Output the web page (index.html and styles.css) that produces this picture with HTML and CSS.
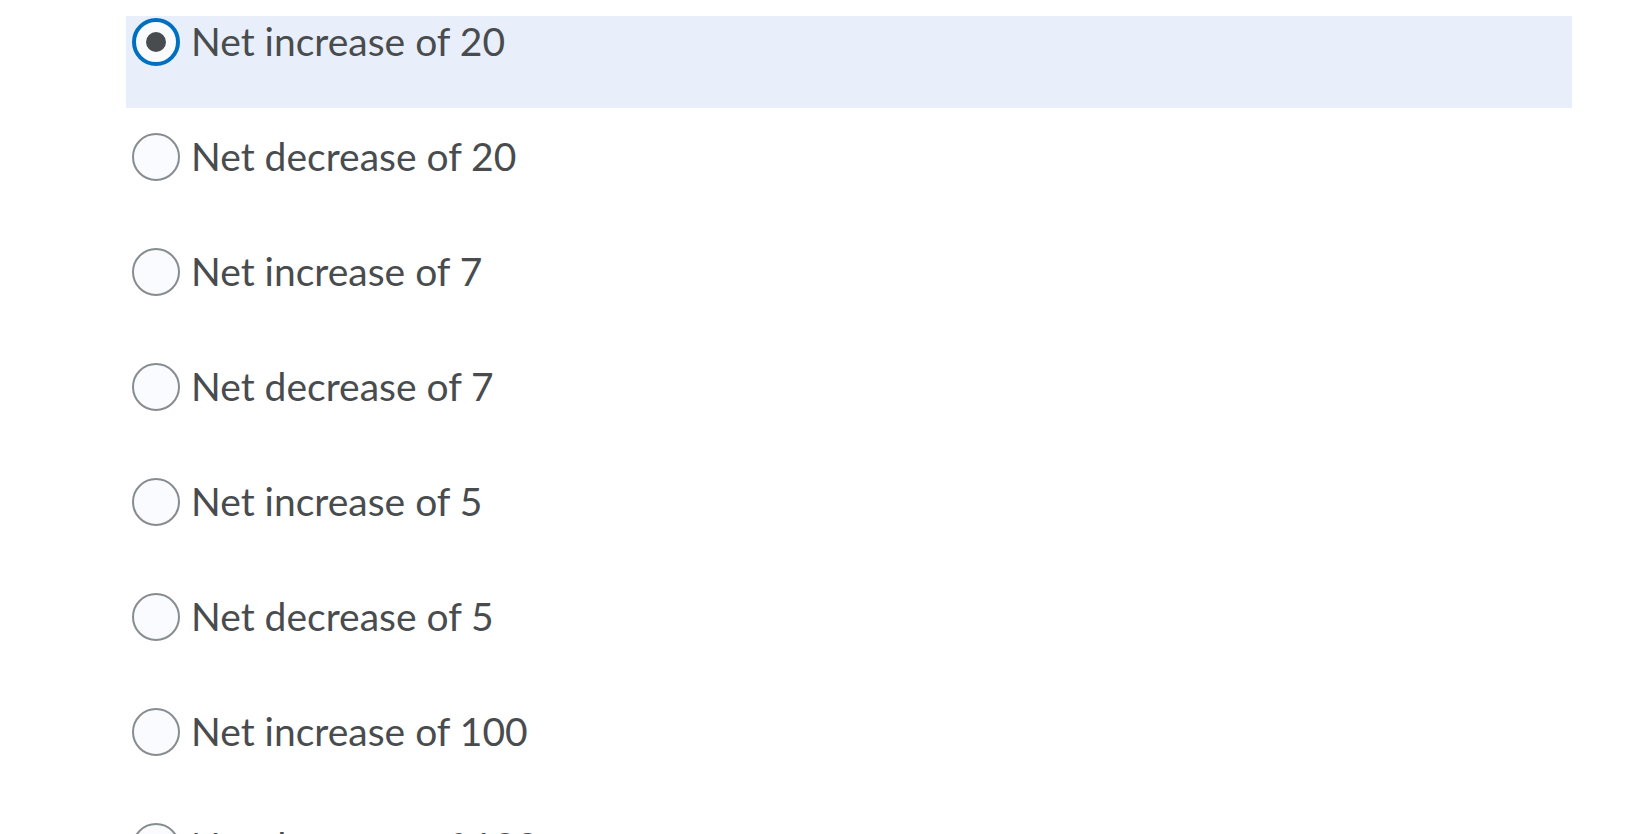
FILE: index.html
```html
<!DOCTYPE html>
<html lang="en">
    <head>
        <meta charset="UTF-8" />
        <meta name="viewport" content="width=device-width, initial-scale=1.0" />
        <title>Question Options</title>
        <link rel="stylesheet" href="styles.css">
    </head>
    <body>
        <div class="choices">
            <label class="choice selected">
                <input type="radio" name="answer" checked />
                <span class="choice-text">Net increase of 20</span>
            </label>
            <label class="choice">
                <input type="radio" name="answer" />
                <span class="choice-text">Net decrease of 20</span>
            </label>
            <label class="choice">
                <input type="radio" name="answer" />
                <span class="choice-text">Net increase of 7</span>
            </label>
            <label class="choice">
                <input type="radio" name="answer" />
                <span class="choice-text">Net decrease of 7</span>
            </label>
            <label class="choice">
                <input type="radio" name="answer" />
                <span class="choice-text">Net increase of 5</span>
            </label>
            <label class="choice">
                <input type="radio" name="answer" />
                <span class="choice-text">Net decrease of 5</span>
            </label>
            <label class="choice">
                <input type="radio" name="answer" />
                <span class="choice-text">Net increase of 100</span>
            </label>
            <label class="choice">
                <input type="radio" name="answer" />
                <span class="choice-text">Net decrease of 100</span>
            </label>
        </div>
    </body>
</html>
```

FILE: styles.css
```css
body {
    margin: 0;
    background-color: #fff;
    font-family: Lato, "Open Sans", sans-serif;
    color: #494c4e;
    overflow: hidden;
}

.choices {
    display: flex;
    flex-direction: column;
    gap: 23px;
    padding: 16px 62px 0 126px;
}

.choice {
    display: flex;
    align-items: flex-start;
    height: 92px;
    box-sizing: border-box;
    padding: 2px 0 0 6px;
    cursor: pointer;
}

.choice.selected {
    background-color: #e8effb;
}

.choice input {
    appearance: none;
    -webkit-appearance: none;
    flex: none;
    width: 48px;
    height: 48px;
    margin: 0;
    box-sizing: border-box;
    border: 2px solid #868c8f;
    border-radius: 50%;
    background-color: #f9fbff;
    display: flex;
    align-items: center;
    justify-content: center;
}

.choice input:checked {
    border: 4px solid #006fbf;
}

.choice input:checked::after {
    content: "";
    width: 20px;
    height: 20px;
    border-radius: 50%;
    background-color: #494c4e;
}

.choice-text {
    margin-left: 11px;
    font-size: 39px;
    line-height: 46px;
}
```
